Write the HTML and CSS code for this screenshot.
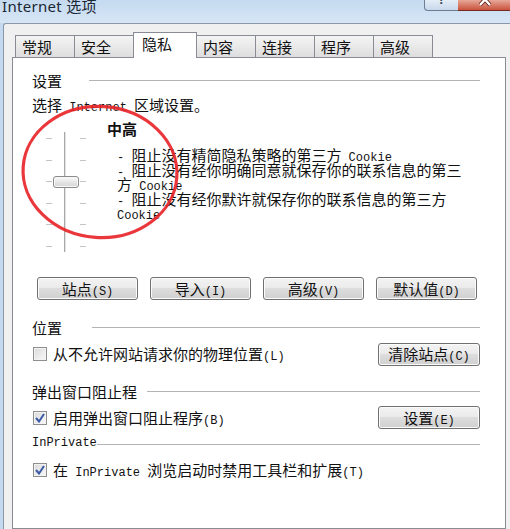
FILE: index.html
```html
<!DOCTYPE html>
<html>
<head>
    <title>Internet 选项</title>
    <link rel="stylesheet" href="styles.css">
</head>
<body>
    <div class="window">
        <div class="titlebar">
            <span class="title">Internet 选项</span>
            <div class="caption">
                <span class="cap-btn help"><span class="help-glyph">?</span></span>
                <span class="cap-btn close">
                    <svg width="16" height="10" viewBox="0 0 16 10">
                        <path d="M1 -6 L11 5 M11 -6 L1 5" stroke="#5a1a10" stroke-width="4" fill="none"/>
                        <path d="M1 -6 L11 5 M11 -6 L1 5" stroke="#ffffff" stroke-width="2.4" fill="none"/>
                    </svg>
                </span>
            </div>
        </div>

        <div class="client">
            <div class="tabs">
                <span class="tab">常规</span>
                <span class="tab">安全</span>
                <span class="tab active">隐私</span>
                <span class="tab">内容</span>
                <span class="tab">连接</span>
                <span class="tab">程序</span>
                <span class="tab">高级</span>
            </div>

            <div class="panel">
                <div class="group-head">
                    <span>设置</span>
                    <span class="rule rule-settings"></span>
                </div>
                <div class="intro">选择<span class="en"> Internet </span>区域设置。</div>

                <div class="privacy">
                    <div class="slider">
                        <div class="ticks"><span></span><span></span><span></span><span></span><span></span><span></span></div>
                        <div class="track"></div>
                        <div class="ticks"><span></span><span></span><span></span><span></span><span></span><span></span></div>
                        <div class="thumb"></div>
                    </div>
                    <div class="level">
                        <h3>中高</h3>
                        <div class="desc">
                            <span class="en">- </span>阻止没有精简隐私策略的第三方<span class="en"> Cookie</span><br>
                            <span class="en">- </span>阻止没有经你明确同意就保存你的联系信息的第三<br>
                            方<span class="en"> Cookie</span><br>
                            <span class="en">- </span>阻止没有经你默许就保存你的联系信息的第三方<br>
                            <span class="en">Cookie</span>
                        </div>
                    </div>
                </div>

                <div class="buttons">
                    <span class="btn"><span>站点<span class="key">(S)</span></span></span>
                    <span class="btn"><span>导入<span class="key">(I)</span></span></span>
                    <span class="btn"><span>高级<span class="key">(V)</span></span></span>
                    <span class="btn"><span>默认值<span class="key">(D)</span></span></span>
                </div>

                <div class="group-head head-location">
                    <span>位置</span>
                    <span class="rule rule-location"></span>
                </div>
                <div class="option option-location">
                    <span class="check"><span class="box"></span><span>从不允许网站请求你的物理位置<span class="key">(L)</span></span></span>
                    <span class="btn btn-wide"><span>清除站点<span class="key">(C)</span></span></span>
                </div>

                <div class="group-head head-popup">
                    <span>弹出窗口阻止程</span>
                    <span class="rule rule-popup"></span>
                </div>
                <div class="option option-popup">
                    <span class="check"><span class="box"><svg width="10" height="10" viewBox="0 0 10 10"><path d="M1 5 L4 8.5 L9 1" stroke="#3b5aa6" stroke-width="2" fill="none"/></svg></span><span>启用弹出窗口阻止程序<span class="key">(B)</span></span></span>
                    <span class="btn btn-wide"><span>设置<span class="key">(E)</span></span></span>
                </div>

                <div class="group-head head-private">
                    <span class="en">InPrivate</span>
                    <span class="rule rule-private"></span>
                </div>
                <div class="option option-private">
                    <span class="check"><span class="box"><svg width="10" height="10" viewBox="0 0 10 10"><path d="M1 5 L4 8.5 L9 1" stroke="#3b5aa6" stroke-width="2" fill="none"/></svg></span><span>在<span class="en"> InPrivate </span>浏览启动时禁用工具栏和扩展<span class="key">(T)</span></span></span>
                </div>
            </div>
        </div>

        <svg class="mark" width="510" height="529" viewBox="0 0 510 529">
            <ellipse cx="100" cy="172" rx="77" ry="65.5" transform="rotate(4 100 172)" fill="none" stroke="#e8262a" stroke-width="3.2" opacity="0.92"/>
        </svg>
    </div>
</body>
</html>
```

FILE: styles.css
```css
body {
    margin: 0;
    background: #c4d9ef;
    font-family: "Noto Sans CJK SC", sans-serif;
    font-size: 15px;
    color: #111;
}

.window {
    width: 510px;
    height: 529px;
    overflow: hidden;
    position: relative;
    display: flex;
    flex-direction: column;
}

/* title bar */
.titlebar {
    height: 23px;
    display: flex;
    justify-content: space-between;
    align-items: flex-start;
    background: linear-gradient(#c5daf0, #d6e6f6);
}

.title {
    font-family: "Noto Sans", "Noto Sans CJK SC", sans-serif;
    font-size: 15px;
    line-height: 15px;
    letter-spacing: 0.3px;
    margin: -1px 0 0 2px;
    color: #1b2633;
}

.caption {
    display: flex;
}

.cap-btn {
    height: 11px;
    box-sizing: border-box;
    display: flex;
    justify-content: center;
    overflow: hidden;
}

.help {
    width: 34px;
    border-left: 1px solid #6e7d92;
    border-bottom: 1px solid #6e7d92;
    border-bottom-left-radius: 4px;
    background: linear-gradient(#e4edf7, #c8d8eb);
}

.help-glyph {
    font-family: "Noto Sans", sans-serif;
    font-weight: bold;
    font-size: 13px;
    line-height: 13px;
    margin-top: -7px;
    color: #3c4a5c;
}

.close {
    width: 52px;
    border-bottom: 1px solid #7a2b1f;
    background: linear-gradient(#e7a898, #c9523c);
    padding-left: 6px;
}

/* dialog body */
.client {
    flex: 1;
    display: flex;
    flex-direction: column;
    margin-left: 3px;
    padding: 8px 4px 0 8px;
    background: #f0f0f0;
    border-top: 1px solid #8a97a8;
    border-left: 1px solid #8a97a8;
    border-top-left-radius: 3px;
}

.tabs {
    display: flex;
    align-items: flex-end;
    height: 25px;
    margin-left: 3px;
}

.tab {
    box-sizing: border-box;
    width: 60px;
    height: 22px;
    margin-right: -1px;
    padding-left: 6px;
    line-height: 21px;
    border: 1px solid #898c95;
    border-bottom: none;
    background: linear-gradient(#f4f4f4, #e9e9e9 50%, #dddddd);
}

.tab.active {
    width: 64px;
    height: 26px;
    margin-bottom: -1px;
    padding-left: 8px;
    background: #fff;
    z-index: 2;
}

.panel {
    flex: 1;
    width: 494px;
    box-sizing: border-box;
    padding: 14px 25px 0 19px;
    background: #fff;
    border: 1px solid #898c95;
}

.en {
    font-family: "Liberation Mono", monospace;
    font-size: 12px;
    line-height: 0;
}

.key {
    font-family: "Liberation Mono", monospace;
    font-size: 12px;
    line-height: 0;
}

.group-head {
    display: flex;
    align-items: center;
    height: 17px;
    line-height: 17px;
}

.rule {
    flex: 1;
    height: 1px;
    background: #b4b4b4;
}

.rule-settings { margin-left: 27px; }
.rule-location { margin-left: 30px; }
.rule-popup { margin-left: 10px; }
.rule-private { margin-top: 4px; }

.intro {
    margin-top: 8px;
    line-height: 16px;
}

/* privacy level slider */
.privacy {
    display: flex;
    height: 139px;
}

.slider {
    position: relative;
    display: flex;
    height: 120px;
    margin: 19px 0 0 14px;
}

.ticks {
    width: 6px;
    display: flex;
    flex-direction: column;
    justify-content: space-between;
    padding: 6px 0 5px;
}

.ticks span {
    height: 1px;
    background: #c4c4c4;
}

.track {
    width: 2px;
    margin: 0 14px 0 12px;
    box-sizing: border-box;
    border-left: 1px solid #a8a8a8;
    border-right: 1px solid #e2e2e2;
}

.thumb {
    position: absolute;
    left: 7px;
    top: 44px;
    width: 26px;
    height: 12px;
    box-sizing: border-box;
    border: 1px solid #8b8b8b;
    border-radius: 3px;
    background: linear-gradient(#fbfbfb, #e6e6e6 50%, #d6d6d6);
    box-shadow: inset 0 0 0 1px #f8f8f8;
}

.level {
    margin-left: 21px;
    padding-top: 8px;
}

.level h3 {
    margin: 0;
    font-size: 15px;
    font-weight: bold;
    line-height: 16px;
}

.desc {
    margin: 11px 0 0 10px;
    line-height: 14.6px;
    white-space: nowrap;
}

/* buttons */
.buttons {
    display: flex;
    gap: 12px;
    margin-top: 25px;
    padding-left: 5px;
}

.btn {
    width: 101px;
    height: 23px;
    box-sizing: border-box;
    display: flex;
    align-items: center;
    justify-content: center;
    border: 1px solid #707070;
    border-radius: 3px;
    background: linear-gradient(#f3f3f3, #ebebeb 45%, #dddddd 50%, #d0d0d0);
    box-shadow: inset 0 0 0 1px #fbfbfb;
    line-height: 20px;
}

.btn-wide {
    width: 102px;
}

/* check options */
.head-location { margin-top: 19px; }
.head-popup { margin-top: 18px; }
.head-private { margin-top: 5px; }

.option {
    display: flex;
    align-items: center;
    justify-content: space-between;
}

.option-location { height: 22px; margin-top: 7px; }
.option-popup { height: 23px; margin-top: 6px; }
.option-private { height: 20px; margin-top: 9px; }

.check {
    display: flex;
    align-items: center;
    padding-left: 1px;
    line-height: 18px;
}

.box {
    width: 14px;
    height: 14px;
    box-sizing: border-box;
    margin-right: 6px;
    display: flex;
    align-items: center;
    justify-content: center;
    border: 1px solid #8e8f8f;
    background: linear-gradient(135deg, #d9d9d9, #fafafa);
    box-shadow: inset 0 0 0 1px #f2f2f2;
}

.mark {
    position: absolute;
    left: 0;
    top: 0;
    pointer-events: none;
}
```
